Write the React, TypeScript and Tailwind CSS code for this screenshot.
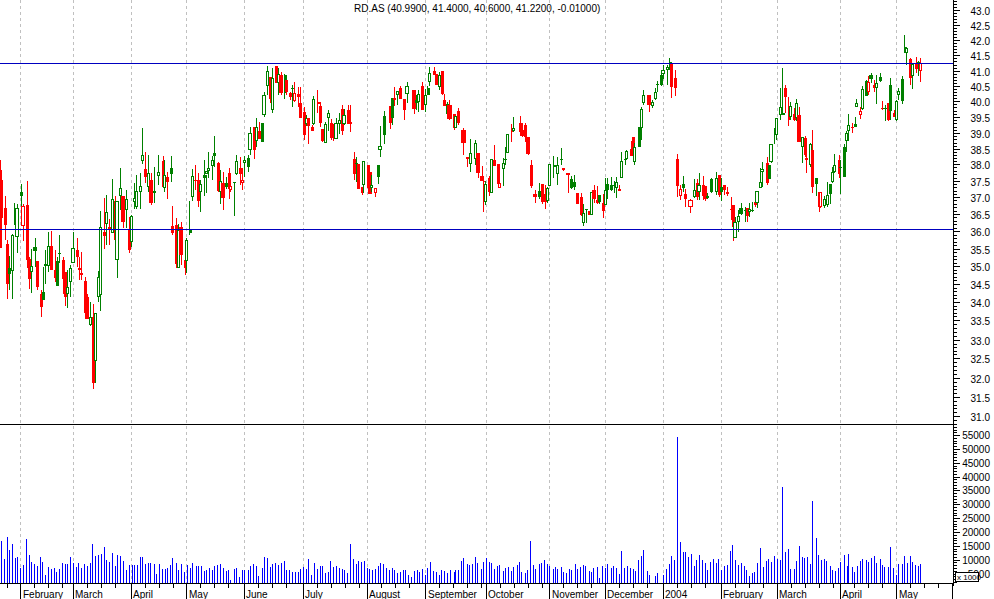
const A = `
0 3 30 293 90 205 r
0 8 60 293 125 205 r
12 18 138 270 175 225 r
18 27 270 447 282 402 r
25 34 318 420 355 372 G
34 42 252 447 255 362 g
42 46 160 225 185 222 G
46 56 162 308 175 262 g
60 69 102 185 125 138 G
64 74 163 272 168 227 R
78 84 93 355 165 330 r
84 93 322 417 327 387 r
89 98 297 428 347 365 g
100 111 265 352 291 303 G
108 117 333 420 333 410 r
120 126 420 500 432 470 r
126 131 352 450 425 450 G
132 142 300 402 343 348 G
142 149 247 365 288 347 g
150 159 243 360 288 360 r
162 168 300 395 360 385 r
168 173 322 408 333 408 G
174 183 255 338 310 312 G
186 191 322 432 330 387 r
192 201 365 468 365 440 r
198 206 360 473 412 432 g
208 215 345 440 355 397 g
214 224 247 338 295 338 g
228 233 265 352 300 320 r
235 244 322 390 354 360 r
240 248 305 390 370 375 r
252 258 380 488 393 488 r
255 267 432 506 440 506 r
268 274 455 527 500 525 g
277 284 462 716 500 698 r
281 290 490 700 490 632 g
292 300 362 455 382 440 g
298 305 183 482 232 435 g
309 318 143 296 246 258 r
316 323 135 285 185 222 g
323 334 208 285 232 238 r
334 341 87 248 148 248 g
342 351 138 285 153 270 r
346 356 153 383 153 330 g
358 364 55 180 115 138 g
363 375 138 233 138 215 r
376 383 120 235 146 180 g
384 392 200 308 238 300 r
389 397 195 292 197 275 g
399 405 100 178 145 155 g
405 413 75 178 123 170 g
418 425 68 178 107 125 g
424 431 -65 42 15 32 g
432 441 6 98 58 80 r
441 448 16 125 68 112 g
448 459 68 165 90 158 r
458 465 52 158 122 128 G
471 478 15 105 65 77 g
486 491 18 112 33 110 r
490 497 30 125 75 115 g
497 507 65 147 80 95 r
511 516 18 95 55 73 G
513 522 168 255 228 248 r
525 532 203 353 225 342 r
531 539 222 353 240 353 g
537 549 216 345 232 315 r
552 557 300 375 330 355 r
556 563 265 368 270 332 g
567 571 152 255 240 248 G
574 581 57 153 78 140 g
583 588 45 120 90 93 r
591 600 70 170 90 152 r
598 605 90 185 103 127 g
610 618 30 138 76 84 G
614 621 75 128 62 72 g
622 629 6 85 55 62 g
634 641 18 90 30 47 g
640 648 -42 50 10 18 G
652 660 37 125 40 123 r
658 665 60 162 93 125 g
664 675 65 180 100 143 r
676 680 80 118 100 112 G
684 693 55 148 68 118 r
686 695 100 125 108 120 R
699 708 97 198 97 100 G
706 713 15 75 34 72 g
717 727 22 105 55 72 r
723 732 55 120 90 100 R
730 737 18 82 30 40 g
741 746 15 65 23 52 G`;
const B = `
745 755 380 466 400 450 g
758 767 381 476 381 450 r
766 773 354 440 382 422 g
774 784 365 417 392 417 r
783 788 370 425 370 425 G
787 797 277 350 286 345 g
799 806 198 285 212 257 g
807 816 232 310 232 297 r
814 821 205 338 235 330 g
825 834 198 250 198 250 r
831 840 205 285 222 248 g
838 850 215 285 225 278 r
851 855 222 298 225 280 G
855 864 240 285 240 275 r
868 873 275 300 278 290 r
873 882 255 320 263 267 G
880 888 247 305 280 303 R
891 901 262 320 283 290 r
896 906 262 353 310 353 r
909 918 320 420 337 405 r
916 923 345 378 355 372 g
922 930 355 432 355 378 r
932 938 375 393 382 393 r
937 946 288 375 297 372 g
950 955 270 340 305 312 r
957 966 305 380 318 368 r
963 972 388 425 388 423 r
973 980 365 430 373 430 g
982 989 330 392 340 355 g`;
const C = `
0 9 208 270 220 265 r
7 12 222 272 222 262 r
13 23 205 266 220 266 g
25 33 190 252 210 222 g
33 41 165 255 178 242 r
37 47 178 225 195 222 g
52 61 165 220 180 222 r
55 65 165 245 216 220 R
70 75 306 390 328 372 r
74 84 322 395 340 342 G
81 90 342 418 342 416 r
93 103 412 435 412 428 r
97 106 334 428 334 404 g
111 118 345 415 345 415 r
115 126 366 432 366 432 r
121 130 375 425 404 415 g
132 140 414 441 414 430 R
141 146 345 402 345 380 G
145 155 228 320 289 301 g
160 165 183 282 197 255 G
177 185 168 236 168 218 r
183 192 144 225 144 205 G
190 198 111 168 144 150 r
198 206 124 164 124 134 g
207 216 108 147 114 147 r
220 224 146 210 146 180 r
226 238 97 158 109 132 g
245 257 120 191 120 177 r
256 262 135 180 150 158 G
262 270 120 185 132 156 g
274 283 96 180 108 180 r
282 290 117 185 135 165 g
290 294 108 135 114 134 G
295 304 51 108 69 95 g
310 319 51 75 63 75 r
316 322 72 105 72 105 r
323 332 65 120 75 110 g
333 342 63 136 63 132 r
338 348 132 168 150 168 r
348 357 155 192 162 192 g
352 366 150 210 165 207 r
368 375 192 240 192 234 r
372 381 198 234 198 234 g
381 389 174 225 183 219 r
393 408 234 315 240 279 r
408 418 321 351 321 327 r
418 427 267 366 309 342 g
432 441 270 345 279 327 g
439 450 309 385 309 369 r
450 462 348 393 378 393 r
459 463 393 486 393 395 r
461 470 392 465 402 456 g
474 481 378 438 384 426 r
480 489 328 430 328 430 g
488 498 285 348 330 348 r
501 510 342 402 342 402 r
503 512 370 414 400 414 R
516 525 325 408 340 356 g
523 531 291 345 327 329 G
529 537 252 310 252 309 g
543 547 223 275 235 245 r
546 554 200 246 235 243 g
566 574 198 258 220 246 r
573 581 220 260 241 258 r
582 591 218 276 226 260 r
588 599 261 315 261 312 r
601 607 330 415 345 408 r
610 622 420 460 432 441 r
624 633 400 447 423 441 G
634 641 402 463 402 456 r
640 650 405 477 432 456 r
648 656 410 458 414 453 g
654 662 342 407 342 407 g
668 672 318 385 345 350 G
677 686 321 406 345 372 g
690 700 295 345 328 330 G
696 705 354 362 354 357 R
708 720 369 430 369 375 r
720 729 378 418 387 415 G
727 737 375 420 396 410 G
739 747 430 462 430 462 r
750 759 430 498 441 496 r
757 766 462 527 490 520 g
766 774 476 520 477 479 G
773 779 483 495 483 495 r
780 789 426 494 426 494 g
786 798 405 459 420 447 r
798 808 408 462 450 459 r
804 813 434 461 435 455 G
816 825 432 503 459 483 r
822 831 384 465 420 465 g
829 838 384 447 402 420 G
840 845 381 423 405 420 G
848 856 393 429 405 407 G
855 863 381 445 397 414 g
864 873 405 423 417 423 r
870 879 306 385 333 385 g
882 890 312 345 327 329 G
886 895 300 330 303 327 g
899 905 273 318 297 318 r
906 915 261 318 261 318 r
910 919 279 345 291 336 g
925 929 232 290 232 290 G
930 938 171 270 177 234 g
936 945 120 165 135 159 g
952 963 135 186 135 165 r
964 971 150 174 156 168 g
972 980 114 150 126 147 g
978 987 93 126 102 106 G`;
const D = `
0 6 150 198 165 195 G
4 14 135 178 150 162 g
17 25 135 195 140 150 g
26 31 114 150 125 130 G
30 39 128 234 128 200 r
42 51 150 228 175 204 r
48 57 402 530 417 497 r
57 65 495 540 507 527 R
66 75 468 515 492 503 G
72 81 507 560 522 537 r
85 98 537 578 540 560 R
99 108 477 535 511 530 g
108 114 478 540 490 530 r
112 122 460 540 495 517 g
125 134 468 541 496 528 r
132 141 498 542 498 538 r
138 146 520 536 528 534 G
150 159 475 520 477 517 G
164 173 457 525 475 515 g
174 183 465 530 465 525 r
180 189 475 542 501 516 G
190 196 495 525 495 510 r
197 206 500 527 517 520 R
211 216 530 600 566 569 r
216 226 555 662 555 620 r
220 230 590 655 607 655 g
232 240 570 635 588 605 g
238 248 550 585 565 582 G
252 258 560 605 570 572 G
259 268 565 605 565 587 r
263 273 548 590 568 575 g
274 280 545 575 569 572 G
281 290 540 560 547 555 r
285 296 514 565 514 550 g
297 305 445 505 487 503 g
301 312 427 500 447 455 g
317 324 410 495 430 490 r
323 329 436 478 436 476 G
327 338 372 428 372 425 g
342 346 325 372 325 345 G
345 354 295 360 295 345 g
357 365 205 300 262 285 g
365 369 145 285 280 285 G
371 381 195 280 205 232 r
383 388 232 318 262 300 r
388 395 245 300 258 290 g
399 408 265 302 283 300 r
405 414 237 302 250 295 g
411 423 260 365 285 365 r
422 431 352 428 352 382 g
431 441 348 410 353 405 r
435 443 395 458 413 421 R
447 456 368 440 373 436 g
453 463 330 520 390 500 r
465 473 473 527 475 492 G
473 479 515 575 515 562 r
476 485 515 565 515 562 R
489 498 527 565 537 557 g
498 506 487 560 524 555 g
507 512 492 552 492 522 G
513 521 440 490 457 486 g
520 528 403 460 435 457 g
533 540 405 475 420 462 r
538 546 420 522 442 445 G
549 554 373 472 382 472 G
556 565 333 395 340 362 g
561 569 282 362 315 332 g
573 581 308 338 321 324 r
582 591 290 322 312 320 G
586 594 238 262 250 260 g
597 605 262 296 272 285 R
603 612 197 270 208 268 g
615 621 180 228 182 228 G
621 629 168 225 185 215 R
628 638 158 190 166 176 G
640 646 180 215 195 205 r
645 654 165 252 190 205 g
657 666 158 185 172 183 G
664 670 243 270 264 267 r
670 680 255 302 264 267 G
681 689 250 302 250 300 r
687 696 173 300 196 272 G
699 705 270 292 278 290 r
705 714 240 302 244 301 g
711 719 205 240 214 226 g
723 728 168 252 178 244 G
731 735 45 100 82 86 G
735 743 82 135 84 100 g
747 756 113 195 118 173 r
753 761 130 206 132 168 g
764 770 112 158 130 148 r
772 778 124 168 126 130 G
777 786 115 185 128 152 R`;

const V1 = [5,42,13,24,22,46,29,33,37,39,46,25,52,26,61,15,70,18,79,44,88,28,95,21,103,19,112,17,121,26,128,21,137,8,145,16,154,14,163,15,170,11,179,14,187,20,196,19,203,19,211,26,220,20,229,16,236,20,245,15,253,19,262,17,270,20,277,39,287,27,295,28,303,29,313,36,320,23,328,21,337,30,345,17,352,28,361,27,370,22,380,13,388,18,396,18,404,18,412,18,421,26,428,26,436,19,445,20,452,20,462,19,470,9,478,19,488,14,495,14,503,15,511,18,518,25,529,20,536,13,545,19,553,11,562,18,572,15,578,20,588,17,595,17,603,17,613,12,620,13,627,15,636,13,644,17,653,18,661,19,670,15,678,12,686,13,691,3,703,14,709,15,718,6,727,13,733,13,745,13,752,17,760,19,768,17,775,7,787,15,793,26,802,25,811,16,818,19,826,20,835,18,843,20,853,22,860,13,868,13,877,11,885,11,895,11,902,14,911,16,920,14,925,24,935,8,943,20,952,14,961,17,967,17,977,10,985,11];
const V2 = [1,22,10,16,19,17,28,15,37,14,44,13,52,10,61,39,70,24,79,19,85,22,94,21,103,22,112,15,118,14,127,13,136,14,145,17,151,20,160,19,169,15,178,13,187,15,193,13,202,10,211,11,220,13,226,13,235,8,244,6,253,12,262,13,268,11,277,14,286,8,292,15,301,21,310,12,319,11,328,8,334,13,343,12,352,10,361,13,373,11,376,13,385,13,394,22,400,25,412,19,418,18,427,19,436,26,442,20,454,14,460,21,469,25,478,21,484,20,493,14,502,17,508,18,520,12,526,15,535,16,544,12,550,16,562,18,568,21,574,11,586,10,592,13,601,42,610,18,616,14,628,19,634,20,643,23,652,19,658,17,670,14,676,16,682,14,694,16,700,11,709,10,718,14,724,13,736,19,742,14,751,16,760,18,766,17,778,12,784,11,790,15,802,16,808,5,817,17,826,15,832,19,844,15,850,17,859,15,868,9,874,32,883,15,892,17,901,15,910,14,916,12,925,23,934,27,940,33,952,12,958,8,976,7,982,10];
const V3 = [10,8,19,14,28,19,34,27,43,23,52,146,61,41,70,31,76,31,85,26,94,29,103,17,109,23,118,28,127,23,136,20,142,13,151,21,160,24,169,20,175,24,184,13,193,17,202,18,211,32,217,38,226,23,235,18,244,20,253,17,259,13,268,7,277,10,283,11,292,20,301,35,310,16,319,22,325,24,334,21,343,27,352,24,361,23,367,96,376,31,385,34,391,14,403,14,409,22,418,37,427,26,433,25,442,26,451,19,457,82,469,45,475,28,484,23,493,24,499,22,511,17,517,13,526,12,535,15,541,21,553,28,562,17,565,29,577,16,583,11,592,17,601,22,607,24,619,23,625,21,634,25,643,27,649,20,661,24,667,18,673,16,685,16,691,36,700,15,709,8,715,19,727,19,733,27,742,20,751,27,757,21,766,18,775,17,781,19];

const PRICE: [string, number][] = [["43.0",10],["42.5",25],["42.0",40],["41.5",55],["41.0",71],["40.5",86],["40.0",101],["39.5",117],["39.0",133],["38.5",149],["38.0",164],["37.5",181],["37.0",197],["36.5",214],["36.0",231],["35.5",249],["35.0",266],["34.5",284],["34.0",302],["33.5",320],["33.0",340],["32.5",358],["32.0",378],["31.5",397],["31.0",416]];
const VOL = ["55000","50000","45000","40000","35000","30000","25000","20000","15000","10000","5000"];
const MONTHS: [string, number, number][] = [["February",23,20],["March",75,73],["April",133,131],["May",189,186],["June",246,244],["July",305,303],["August",369,367],["September",428,425],["October",488,486],["November",552,549],["December",607,605],["2004",665,663],["February",723,721],["March",779,777],["April",842,840],["May",899,896]];
const GRID = MONTHS.map((m) => m[2]);

function parse(src: string, ox: number, oy: number) {
  return src.trim().split("\n").map((line) => {
    const p = line.trim().split(" ");
    const [l, r, hi, lo, top, bot] = p.slice(0, 6).map(Number);
    return {
      x0: Math.round(ox + l / 3),
      x1: Math.round(ox + r / 3),
      hi: Math.round(oy + hi / 3),
      lo: Math.round(oy + lo / 3),
      top: Math.round(oy + top / 3),
      bot: Math.round(oy + bot / 3),
      t: p[6],
    };
  });
}
const candles = [...parse(A, 0, 150), ...parse(B, 0, 0), ...parse(C, 330, 50), ...parse(D, 660, 20)];

function bars(v: number[], ox: number) {
  const out: { x: number; h: number }[] = [];
  for (let i = 0; i < v.length; i += 2) out.push({ x: Math.floor(ox + v[i] / 3), h: v[i + 1] });
  return out;
}
const volumes = [...bars(V1, 0), ...bars(V2, 330), ...bars(V3, 660)];

const minor: number[] = [];
for (let y = 10 - 3; y > 0; y -= 3) minor.push(y);
PRICE.forEach(([, y], i) => {
  if (i < PRICE.length - 1) {
    const step = (PRICE[i + 1][1] - y) / 5;
    for (let k = 1; k < 5; k++) minor.push(Math.round(y + step * k));
  }
});
for (let k = 1; k < 3; k++) minor.push(416 + k * 4);
for (let y = 424; y < 583; y += 2.77) minor.push(Math.round(y));

const weekly: number[] = [7];
GRID.forEach((m, i) => {
  const next = GRID[i + 1] ?? 952;
  for (let x = m + 14; x < next - 4; x += 13.85) weekly.push(Math.round(x));
});

export default function App() {
  return (
    <div className="w-[994px] h-[599px] bg-white overflow-hidden font-['Liberation_Sans',Arial,sans-serif]">
      <svg width={994} height={599} viewBox="0 0 994 599" className="block">
        <g shapeRendering="crispEdges">
          {GRID.map((x) => (
            <line key={x} x1={x + 0.5} x2={x + 0.5} y1={0} y2={583} stroke="#c0c0c0" strokeDasharray="3 3" />
          ))}
          {candles.map((c, i) => {
            const cx = Math.floor((c.x0 + c.x1) / 2);
            const col = c.t === "r" || c.t === "R" ? "#ff0000" : "#008000";
            const hollow = c.t === "g" || c.t === "R";
            const w = Math.max(c.x1 - c.x0, 3);
            const h = Math.max(c.bot - c.top, 1);
            return (
              <g key={i}>
                <rect x={cx} y={c.hi} width={1} height={Math.max(c.lo - c.hi, 1)} fill={col} />
                {hollow ? (
                  <rect x={c.x0 + 0.5} y={c.top + 0.5} width={w - 1} height={Math.max(h - 1, 1)} fill="#ffffff" stroke={col} />
                ) : (
                  <rect x={c.x0} y={c.top} width={w} height={h} fill={col} />
                )}
              </g>
            );
          })}
          <rect x={0} y={63} width={953} height={1} fill="#0000c0" />
          <rect x={0} y={229} width={953} height={1} fill="#0000c0" />
          <rect x={0} y={424} width={953} height={1} fill="#000000" />
          {volumes.map((b, i) => (
            <rect key={i} x={b.x} y={583 - b.h} width={1} height={b.h} fill="#0000ff" />
          ))}
          <rect x={0} y={583} width={953} height={1} fill="#000000" />
          <rect x={953} y={0} width={1} height={586} fill="#000000" />
          {minor.map((y, i) => (
            <rect key={i} x={954} y={y} width={3} height={1} fill="#000000" />
          ))}
          {PRICE.map(([l, y]) => (
            <rect key={l} x={954} y={y} width={6} height={1} fill="#000000" />
          ))}
          {VOL.map((l, i) => (
            <rect key={l} x={954} y={Math.round(435 + i * 13.85)} width={6} height={1} fill="#000000" />
          ))}
          {weekly.map((x, i) => (
            <rect key={i} x={x} y={584} width={1} height={4} fill="#000000" />
          ))}
          {GRID.map((x) => (
            <rect key={x} x={x} y={584} width={1} height={15} fill="#000000" />
          ))}
          <rect x={952} y={584} width={1} height={15} fill="#000000" />
        </g>
        <g className="text-[10px]" fill="#000000">
          <text x={354} y={12}>RD.AS (40.9900, 41.4000, 40.6000, 41.2200, -0.01000)</text>
          {PRICE.map(([l, y]) => (
            <text key={l} x={990} y={y + 5} textAnchor="end">{l}</text>
          ))}
          {VOL.map((l, i) => (
            <text key={l} x={990} y={Math.round(435 + i * 13.85) + 4} textAnchor="end">{l}</text>
          ))}
          {MONTHS.map(([l, x]) => (
            <text key={x} x={x} y={598}>{l}</text>
          ))}
        </g>
        <rect x={955.5} y={572.5} width={23} height={9} fill="#ffffff" stroke="#000000" shapeRendering="crispEdges" />
        <text x={957} y={580} className="text-[8px]" fill="#000000">x 1000</text>
      </svg>
    </div>
  );
}
